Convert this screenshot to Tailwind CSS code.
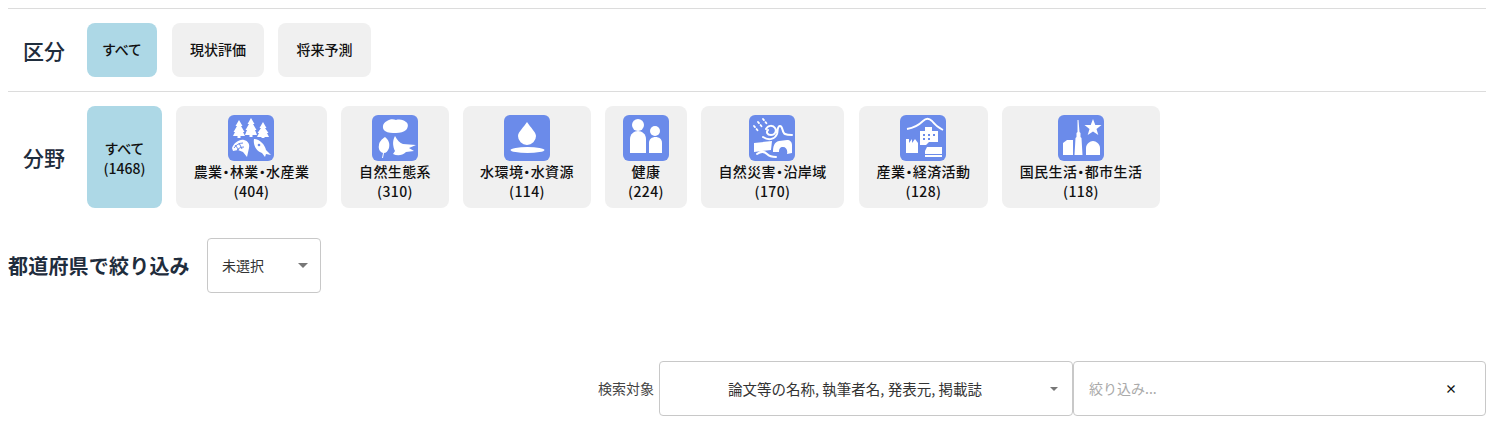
<!DOCTYPE html>
<html lang="ja">

<head>
    <meta charset="UTF-8">
    <title>区分 分野</title>
    <script src="https://cdn.jsdelivr.net/npm/@tailwindcss/browser@4"></script>
</head>

<body class="bg-white font-['Noto_Sans_CJK_JP','Noto_Sans',sans-serif] text-[#111] antialiased">
    <div class="w-[1500px] h-[430px] overflow-hidden px-2 pt-2">

        <!-- 区分 -->
        <div class="border-t border-[#dcdcdc] h-[83px] flex items-center pl-[15px] w-[1478px]">
            <h2 class="w-[64px] text-[21px] font-medium text-[#1f2d3d] leading-none">区分</h2>
            <div class="flex">
                <button class="w-[70px] h-[54px] pb-[2px] rounded-lg bg-[#add8e6] text-[14px] font-medium mr-[15px] [font-feature-settings:'palt']">すべて</button>
                <button class="w-[92px] h-[54px] pb-[2px] rounded-lg bg-[#f0f0f0] text-[14px] font-medium mr-[14px]">現状評価</button>
                <button class="w-[93px] h-[54px] pb-[2px] rounded-lg bg-[#f0f0f0] text-[14px] font-medium">将来予測</button>
            </div>
        </div>

        <!-- 分野 -->
        <div class="border-t border-[#dcdcdc] flex items-center pl-[15px] pt-[14px] w-[1478px]">
            <h2 class="w-[64px] text-[21px] font-medium text-[#1f2d3d] leading-none">分野</h2>
            <div class="flex gap-[14px] tracking-[0.4px] [font-feature-settings:'palt']">
                <button class="w-[75px] h-[102px] pt-[2px] rounded-lg bg-[#add8e6] text-[14px] leading-[20px] font-medium tracking-normal flex flex-col items-center justify-center">
                    <span>すべて</span><span>(1468)</span>
                </button>

                <button class="w-[151px] h-[102px] rounded-lg bg-[#f0f0f0] text-[14px] leading-[20px] font-medium flex flex-col items-center pt-[9px]">
                    <svg class="w-[46px] h-[46px] mr-px" viewBox="0 0 46 46">
                        <rect width="46" height="46" rx="6" fill="#6b8bea" />
                        <g fill="#fff">
                            <path d="M11 5 7.500 11H9L5.500 17H7L5 21h4.500v2h3v-2H17l-2-4h1.500L13 11h1.500z" />
                            <path d="M23 3 19.500 9H21l-3.500 6H19l-2 5h4.500v2h3v-2H29l-2-5h1.500L25 9h1.500z" />
                            <path d="M35 7 31.500 13H33l-3.500 5H31l-2 4h4.500v1h3v-1H41l-2-4h1.500L37 13h1.500z" />
                            <path d="M4 33c2-5 7-9 12-8 4 1 6 4 5 8l-2 9-4-5-5-2-5 1z" />
                            <path d="M26 24c6 0 11 6 12 11l5 5-5-1-1 3-3-4c-6-2-9-8-8-14z" />
                        </g>
                        <g fill="none" stroke="#6b8bea" stroke-width="1">
                            <path d="M6 33c2-3 5-5 9-5M9 35c2-2 4-3 7-3M11 28l3 6M7 30l4 5" />
                        </g>
                        <circle cx="31" cy="30" r="1.300" fill="#6b8bea" />
                    </svg>
                    <span>農業・林業・水産業</span><span>(404)</span>
                </button>

                <button class="w-[108px] h-[102px] rounded-lg bg-[#f0f0f0] text-[14px] leading-[20px] font-medium flex flex-col items-center pt-[9px]">
                    <svg class="w-[46px] h-[46px]" viewBox="0 0 46 46">
                        <rect width="46" height="46" rx="6" fill="#6b8bea" />
                        <g fill="#fff">
                            <path d="M15 6c3-2 6-2 9-1 4-1 8 0 10 2 3 2 2 6 0 8-2 2-6 3-10 3-4 0-8 0-11-2-3-2-3-8 2-10z" />
                            <path d="M13 22c4 3 5 7 4 11-1 3-3 5-5 5l-1 5h-1l1-5c-3-1-5-4-4-8 0-3 3-6 6-8z" />
                            <path d="M23 21c2 4 5 7 8 8l13 1-7 3 5 3-8 1c-4 4-9 4-13 2l2-3c-2-4-3-10 0-15z" />
                        </g>
                    </svg>
                    <span>自然生態系</span><span>(310)</span>
                </button>

                <button class="w-[128px] h-[102px] rounded-lg bg-[#f0f0f0] text-[14px] leading-[20px] font-medium flex flex-col items-center pt-[9px]">
                    <svg class="w-[46px] h-[46px] mr-px" viewBox="0 0 46 46">
                        <rect width="46" height="46" rx="6" fill="#6b8bea" />
                        <g fill="#fff">
                            <path d="M23 7c3 5 9 10 9 14a9 9 0 0 1-18 0c0-4 6-9 9-14z" />
                            <ellipse cx="23.500" cy="35" rx="17" ry="3" />
                        </g>
                    </svg>
                    <span>水環境・水資源</span><span>(114)</span>
                </button>

                <button class="w-[82px] h-[102px] rounded-lg bg-[#f0f0f0] text-[14px] leading-[20px] font-medium flex flex-col items-center pt-[9px]">
                    <svg class="w-[46px] h-[46px]" viewBox="0 0 46 46">
                        <rect width="46" height="46" rx="6" fill="#6b8bea" />
                        <g fill="#fff">
                            <circle cx="15" cy="10" r="6" />
                            <path d="M7 38V24c0-5 4-8 8-8s8 3 8 8v14z" />
                            <circle cx="32" cy="16" r="5" />
                            <path d="M26 38V28c0-4 3-6 6.500-6s6.500 2 6.500 6v10z" />
                        </g>
                    </svg>
                    <span>健康</span><span>(224)</span>
                </button>

                <button class="w-[143px] h-[102px] rounded-lg bg-[#f0f0f0] text-[14px] leading-[20px] font-medium flex flex-col items-center pt-[9px]">
                    <svg class="w-[46px] h-[46px] mr-px" viewBox="0 0 46 46">
                        <rect width="46" height="46" rx="6" fill="#6b8bea" />
                        <g fill="none" stroke="#fff" stroke-linecap="round">
                            <path stroke-width="1.800" stroke-dasharray="1.500 2.500" d="M5 11l5 6M9 7l5 6M14 4l4 5" />
                            <path stroke-width="2" d="M17 14c2-4 7-4 9-1s0 7-4 7-5-3-3-5M14 22c6 4 12 2 14-3 1-3 0-8 3-8 3 0 2 7 5 8 2 1 5 1 7 1" />
                            <path stroke-width="2" d="M8 39c4-3 7-3 10 0s6 3 9 3" />
                        </g>
                        <path fill="#fff" d="M5 28l18-2-1 9-17 2zM24 37c0-5 1-10 6-11l8-1c3 0 5 2 5 5v8l-5 1c1-4-1-7-4-7s-4 2-4 5z" />
                    </svg>
                    <span>自然災害・沿岸域</span><span>(170)</span>
                </button>

                <button class="w-[129px] h-[102px] rounded-lg bg-[#f0f0f0] text-[14px] leading-[20px] font-medium flex flex-col items-center pt-[9px] ml-px">
                    <svg class="w-[46px] h-[46px] mr-px" viewBox="0 0 46 46">
                        <rect width="46" height="46" rx="6" fill="#6b8bea" />
                        <path fill="none" stroke="#fff" stroke-width="1.800" d="M7 14c6-1 12-4 16-8 3-3 6-3 9 0 3 4 7 7 11 9" />
                        <g fill="#fff">
                            <path d="M20 16h5v-4h7v4h6v11H29l-3 3h-6z" />
                            <path d="M6 38V24l3 0v4l3-4 0 4 3-4 3 4v10z" />
                            <path d="M25 36l2-4h15v10H25z" />
                        </g>
                        <g fill="#6b8bea">
                            <rect x="23" y="19" width="2" height="2" />
                            <rect x="28" y="19" width="2" height="2" />
                            <rect x="33" y="19" width="2" height="2" />
                            <rect x="23" y="23" width="2" height="2" />
                            <rect x="28" y="23" width="2" height="2" />
                            <rect x="25" y="39" width="17" height="1" />
                        </g>
                    </svg>
                    <span>産業・経済活動</span><span>(128)</span>
                </button>

                <button class="w-[158px] h-[102px] rounded-lg bg-[#f0f0f0] text-[14px] leading-[20px] font-medium flex flex-col items-center pt-[9px]">
                    <svg class="w-[46px] h-[46px]" viewBox="0 0 46 46">
                        <rect width="46" height="46" rx="6" fill="#6b8bea" />
                        <g fill="#fff">
                            <path d="M19.500 5h1l1 12 1 1v4l1 1 1 17h-8l1-17 1-1v-4l1-1z" />
                            <path d="M5 40V28l4-3h6v15z" />
                            <path d="M28 40V33c0-4 4-7 7-7s7 3 7 7v7z" />
                            <path d="M35 4l2.300 6h6.200l-5 4 1.800 6-5.300-3.500-5.300 3.500 1.800-6-5-4h6.200z" />
                        </g>
                    </svg>
                    <span>国民生活・都市生活</span><span>(118)</span>
                </button>
            </div>
        </div>

        <!-- 都道府県 -->
        <div class="flex items-center mt-[30px]">
            <h2 class="w-[199px] text-[20px] tracking-[0.2px] font-bold text-[#1f2d3d] leading-none">都道府県で絞り込み</h2>
            <div class="w-[114px] h-[55px] border border-[#c8c8c8] rounded flex items-center justify-between pl-[14px] pr-[12px] text-[14px] text-[#333]">
                <span>未選択</span>
                <span class="w-0 h-0 border-x-[5px] border-x-transparent border-t-[5px] border-t-[#777]"></span>
            </div>
        </div>

        <!-- 検索対象 -->
        <div class="flex items-center justify-end mt-[68px] w-[1478px]">
            <span class="text-[14px] text-[#444] mr-[5px]">検索対象</span>
            <div class="w-[414px] h-[55px] border border-[#c8c8c8] rounded flex items-center pr-[14px] text-[14.5px] text-[#333]">
                <span class="flex-1 text-center">論文等の名称, 執筆者名, 発表元, 掲載誌</span>
                <span class="w-0 h-0 border-x-[4px] border-x-transparent border-t-[4px] border-t-[#777]"></span>
            </div>
            <div class="w-[413px] h-[55px] border border-[#c8c8c8] rounded flex items-center justify-between pl-[15px] pr-[30px] text-[14px]">
                <span class="text-[#aaa]">絞り込み...</span>
                <span class="text-[#111] font-bold text-[12px] leading-none mr-[-2px]">×</span>
            </div>
        </div>
    </div>
</body>

</html>
